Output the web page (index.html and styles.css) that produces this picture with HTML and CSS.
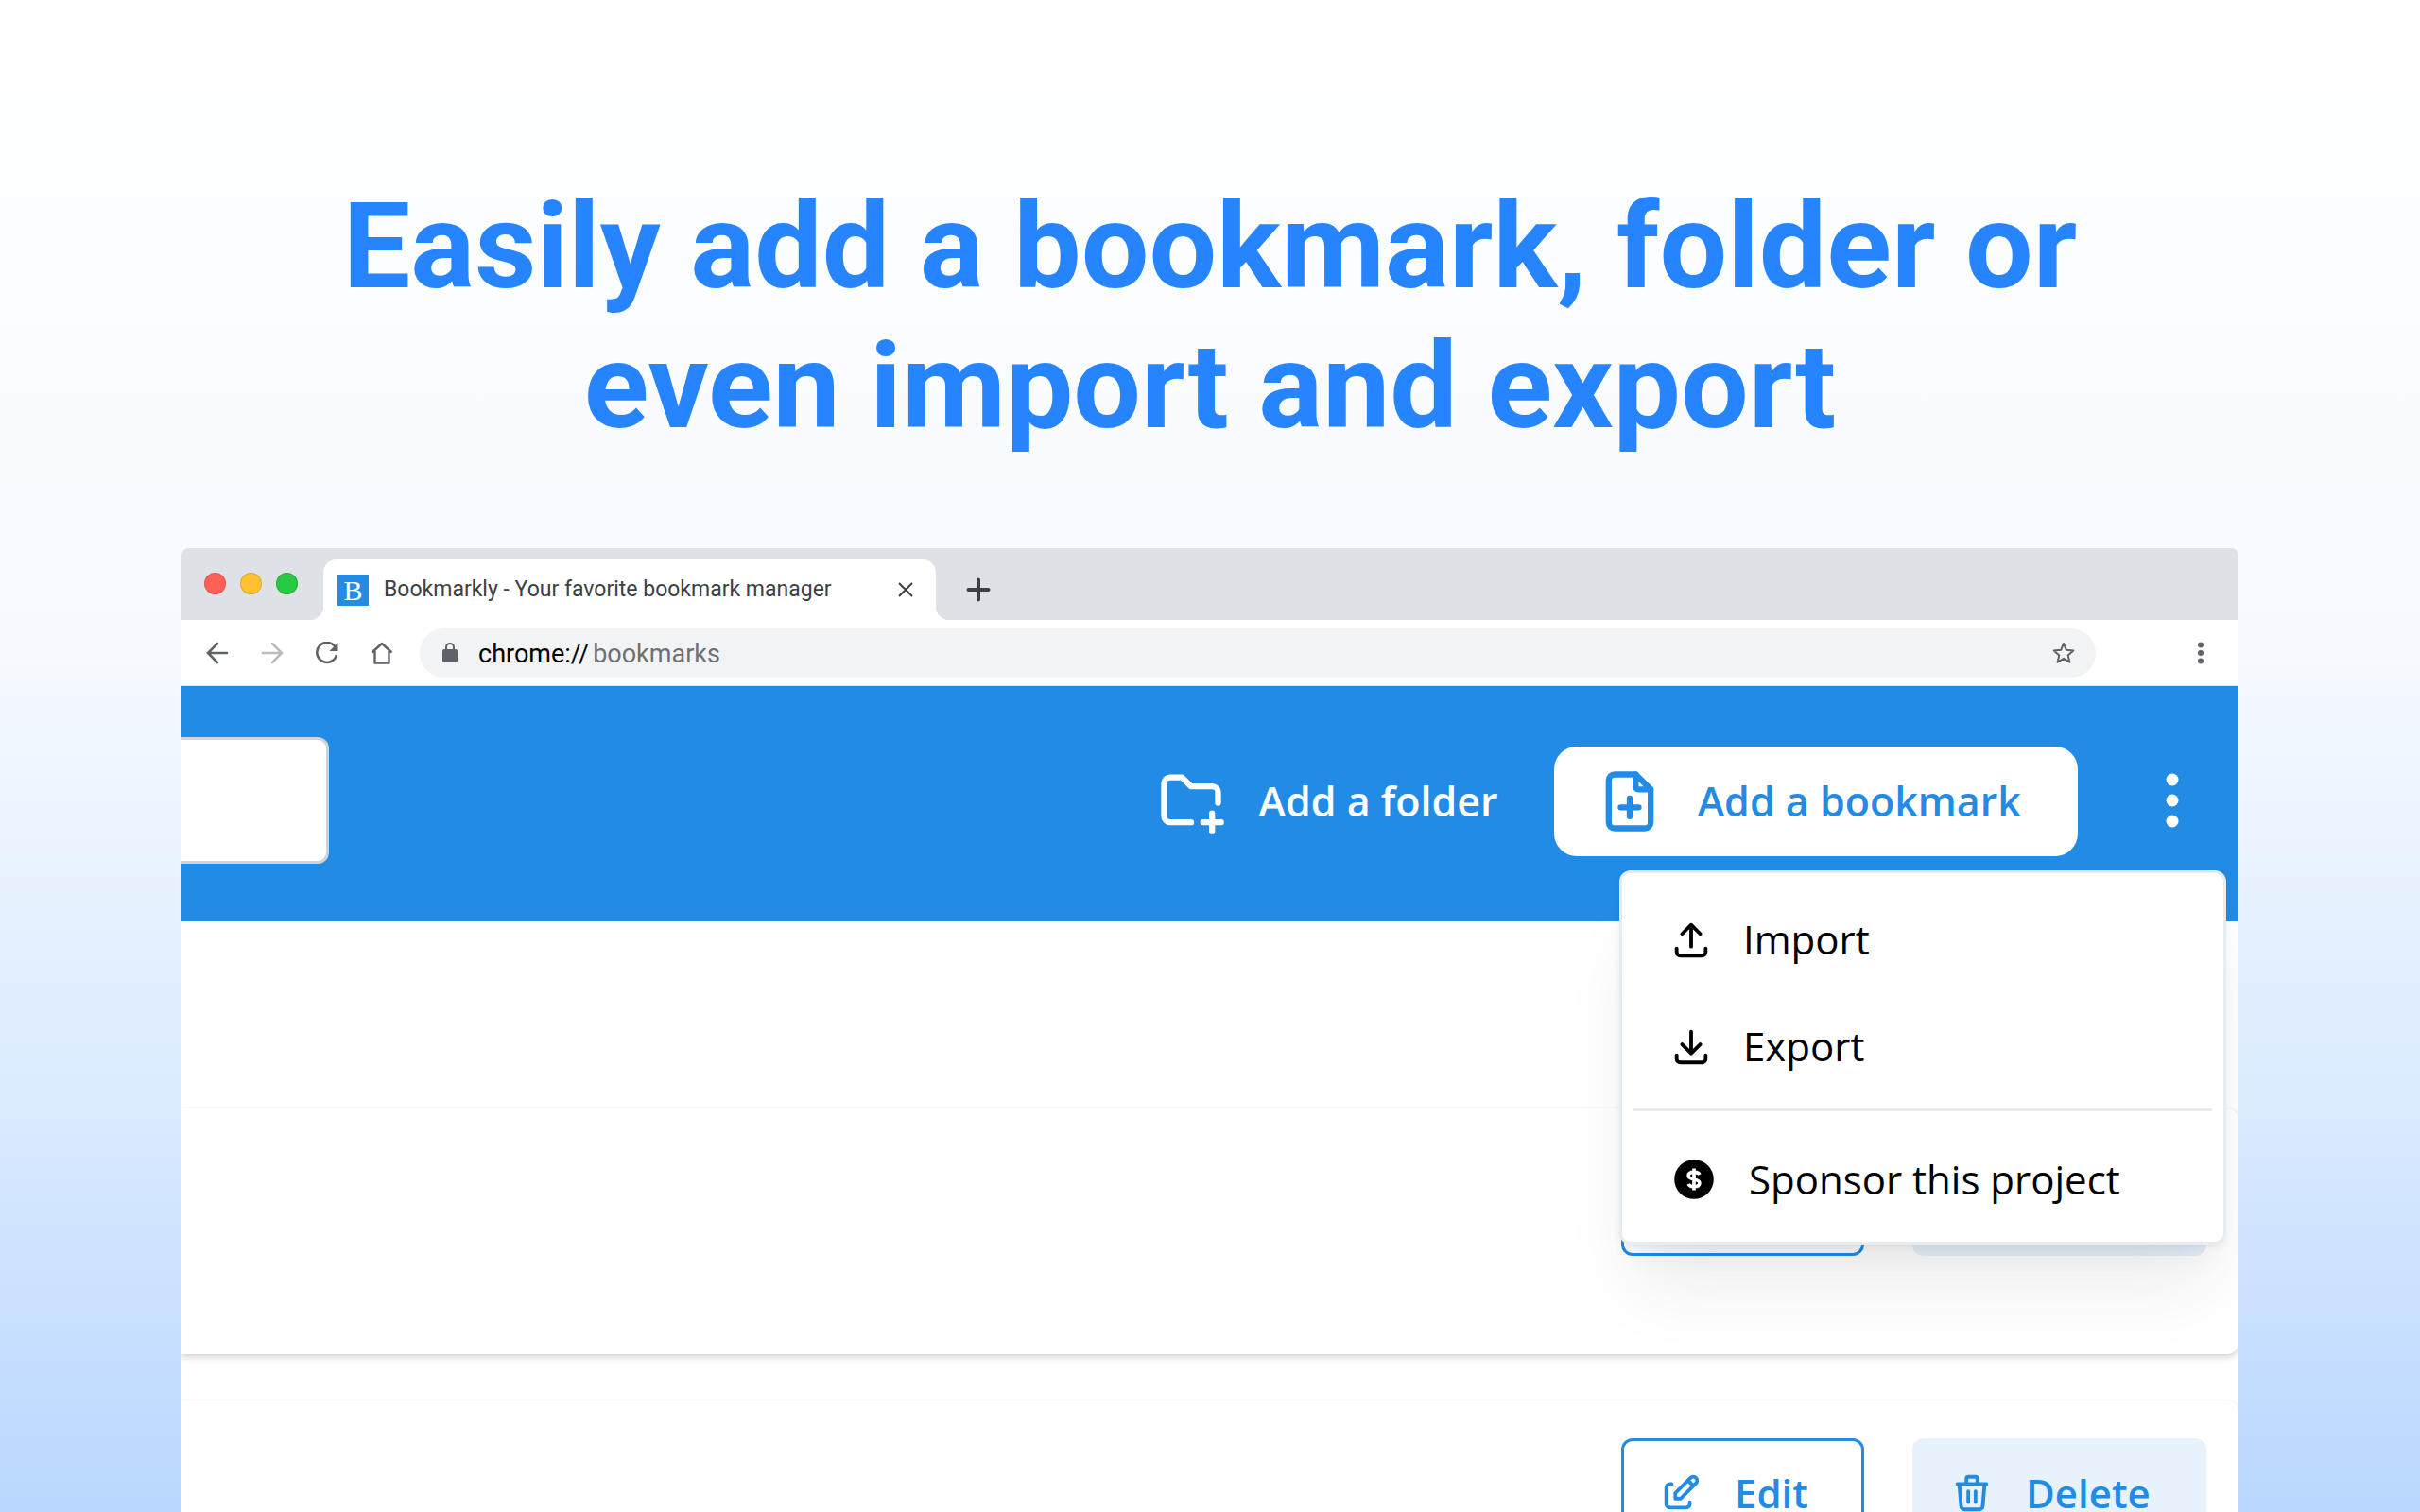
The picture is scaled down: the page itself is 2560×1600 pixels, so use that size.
FILE: index.html
```html
<!DOCTYPE html>
<html lang="en">
<head>
<meta charset="utf-8">
<title>Bookmarkly</title>
<link rel="stylesheet" href="styles.css">
</head>
<body>
<main class="promo">
  <h1 class="headline">Easily add a bookmark, folder or<br>even import and export</h1>

  <section class="window">
    <div class="tab-strip">
      <div class="lights">
        <span class="light light-red"></span>
        <span class="light light-yellow"></span>
        <span class="light light-green"></span>
      </div>
      <div class="tab">
        <span class="favicon">B</span>
        <span class="tab-title">Bookmarkly - Your favorite bookmark manager</span>
        <button class="tab-button" aria-label="Close tab">
          <svg width="16" height="16" viewBox="0 0 16 16" fill="none" stroke="#3c4043" stroke-width="2"><path d="M1 1 15 15M15 1 1 15"/></svg>
        </button>
      </div>
      <button class="tab-button new-tab" aria-label="New tab">
        <svg width="26" height="26" viewBox="0 0 26 26" fill="none" stroke="#3c4043" stroke-width="4" stroke-linecap="round"><path d="M13 2.500V23.500M2.500 13H23.500"/></svg>
      </button>
    </div>

    <div class="toolbar">
      <div class="nav">
        <button class="nav-button" aria-label="Back">
          <svg width="24" height="24" viewBox="0 0 24 24" fill="none" stroke="#5f6368" stroke-width="2.600" stroke-linecap="round"><path d="M22 12H2.500M12 2 2 12 12 22"/></svg>
        </button>
        <button class="nav-button" aria-label="Forward">
          <svg width="24" height="24" viewBox="0 0 24 24" fill="none" stroke="#babcbe" stroke-width="2.600" stroke-linecap="round"><path d="M2 12H21.500M12 2 22 12 12 22"/></svg>
        </button>
        <button class="nav-button" aria-label="Reload">
          <svg width="24" height="24" viewBox="0 0 24 24" fill="none" stroke="#5f6368" stroke-width="2.600"><path d="M20.500 5.500A10.500 10.500 0 1 0 22 14"/><path d="M23.500 1V10H14.500Z" fill="#5f6368" stroke="none"/></svg>
        </button>
        <button class="nav-button" aria-label="Home">
          <svg width="24" height="24" viewBox="0 0 24 24" fill="none" stroke="#5f6368" stroke-width="2.400" stroke-linejoin="round"><path d="M1.500 11.500 12 2 22.500 11.500"/><path d="M4.500 10V22.500H19.500V10"/></svg>
        </button>
      </div>
      <div class="address">
        <svg width="16" height="22" viewBox="0 0 16 22"><path d="M4 8V5a4 4 0 0 1 8 0v3" fill="none" stroke="#5f6368" stroke-width="2"/><rect y="7" width="16" height="14" rx="2" fill="#5f6368"/></svg>
        <span class="url">chrome://<span class="url-path">bookmarks</span></span>
        <button class="nav-button" aria-label="Bookmark this tab">
          <svg width="24" height="24" viewBox="0 0 24 24" fill="none" stroke="#5f6368" stroke-width="2" stroke-linejoin="round"><path d="M12 2 14.900 8.800 22.300 9.500 16.700 14.400 18.400 21.700 12 17.800 5.600 21.700 7.300 14.400 1.700 9.500 9.100 8.800Z"/></svg>
        </button>
      </div>
      <button class="nav-button" aria-label="Browser menu">
        <svg width="24" height="24" viewBox="0 0 24 24" fill="#5f6368"><circle cx="12" cy="3.500" r="3"/><circle cx="12" cy="12" r="3"/><circle cx="12" cy="20.500" r="3"/></svg>
      </button>
    </div>

    <div class="app">
      <header class="app-header">
        <input class="search" type="text" aria-label="Search">
        <button class="header-button">
          <svg width="76" height="76" viewBox="0 0 24 24" fill="none" stroke="#fff" stroke-width="2" stroke-linecap="round" stroke-linejoin="round"><path d="M12 19H5a2 2 0 0 1-2-2V6a2 2 0 0 1 2-2h4l3 3h7a2 2 0 0 1 2 2v3.500"/><path d="M16 19h6M19 16v6"/></svg>
          <span>Add a folder</span>
        </button>
        <button class="header-button header-button-light">
          <svg width="76" height="76" viewBox="0 0 24 24" fill="none" stroke="#228be6" stroke-width="2" stroke-linecap="round" stroke-linejoin="round"><path d="M14 3v4a1 1 0 0 0 1 1h4"/><path d="M17 21H7a2 2 0 0 1-2-2V5a2 2 0 0 1 2-2h7l5 5v11a2 2 0 0 1-2 2Z"/><path d="M12 11v6M9 14h6"/></svg>
          <span>Add a bookmark</span>
        </button>
        <div class="more">
          <button class="more-button" aria-label="More" aria-expanded="true">
            <svg width="16" height="60" viewBox="0 0 16 60" fill="#fff"><circle cx="8" cy="7" r="6.500"/><circle cx="8" cy="29" r="6.500"/><circle cx="8" cy="51" r="6.500"/></svg>
          </button>
          <div class="menu" role="menu">
            <button class="menu-item" role="menuitem">
              <svg width="46" height="50" viewBox="0 0 24 24" fill="none" stroke="#000" stroke-width="2" stroke-linecap="round" stroke-linejoin="round"><path d="M4 17v2a2 2 0 0 0 2 2h12a2 2 0 0 0 2-2v-2"/><path d="M7 9l5-5 5 5M12 4v12"/></svg>
              <span>Import</span>
            </button>
            <button class="menu-item" role="menuitem">
              <svg width="46" height="50" viewBox="0 0 24 24" fill="none" stroke="#000" stroke-width="2" stroke-linecap="round" stroke-linejoin="round"><path d="M4 17v2a2 2 0 0 0 2 2h12a2 2 0 0 0 2-2v-2"/><path d="M7 11l5 5 5-5M12 4v12"/></svg>
              <span>Export</span>
            </button>
            <hr class="menu-divider">
            <button class="menu-item" role="menuitem">
              <svg width="52" height="54" viewBox="0 0 24 24"><circle cx="12" cy="12" r="9.600"/><path d="M14.700 9.700A2.600 1.700 0 0 0 12 8.500c-1.700 0-2.700.7-2.700 1.700 0 2.500 5.400 1.100 5.400 3.600 0 1-1 1.700-2.700 1.700a2.600 1.700 0 0 1-2.700-1.200M12 6.700v10.600" fill="none" stroke="#fff" stroke-width="1.700"/></svg>
              <span>Sponsor this project</span>
            </button>
          </div>
        </div>
      </header>

      <div class="list">
        <article class="card">
          <button class="card-button edit" aria-label="Edit">
            <svg width="46" height="50" viewBox="0 0 24 24" fill="none" stroke="#228be6" stroke-width="2" stroke-linecap="round" stroke-linejoin="round"><path d="M7 7H6a2 2 0 0 0-2 2v9a2 2 0 0 0 2 2h9a2 2 0 0 0 2-2v-1"/><path d="M20.400 6.600a2.100 2.100 0 0 0-3-3L9 12v3h3l8.400-8.400ZM16 5l3 3"/></svg>
          </button>
          <button class="card-button delete" aria-label="Delete">
            <svg width="46" height="50" viewBox="0 0 24 24" fill="none" stroke="#228be6" stroke-width="2" stroke-linecap="round" stroke-linejoin="round"><path d="M4 7h16M10 11v6M14 11v6M5 7l1 12a2 2 0 0 0 2 2h8a2 2 0 0 0 2-2l1-12M9 7V4a1 1 0 0 1 1-1h4a1 1 0 0 1 1 1v3"/></svg>
          </button>
        </article>
        <article class="card">
          <button class="card-button edit">
            <svg width="46" height="50" viewBox="0 0 24 24" fill="none" stroke="#228be6" stroke-width="2" stroke-linecap="round" stroke-linejoin="round"><path d="M7 7H6a2 2 0 0 0-2 2v9a2 2 0 0 0 2 2h9a2 2 0 0 0 2-2v-1"/><path d="M20.400 6.600a2.100 2.100 0 0 0-3-3L9 12v3h3l8.400-8.400ZM16 5l3 3"/></svg>
            <span>Edit</span>
          </button>
          <button class="card-button delete">
            <svg width="46" height="50" viewBox="0 0 24 24" fill="none" stroke="#228be6" stroke-width="2" stroke-linecap="round" stroke-linejoin="round"><path d="M4 7h16M10 11v6M14 11v6M5 7l1 12a2 2 0 0 0 2 2h8a2 2 0 0 0 2-2l1-12M9 7V4a1 1 0 0 1 1-1h4a1 1 0 0 1 1 1v3"/></svg>
            <span>Delete</span>
          </button>
        </article>
      </div>
    </div>
  </section>
</main>
</body>
</html>
```
FILE: styles.css
```css
* { box-sizing: border-box; }

body {
  margin: 0;
  font-family: Roboto, "Liberation Sans", sans-serif;
}

button {
  display: flex;
  align-items: center;
  padding: 0;
  border: 0;
  background: none;
  font: inherit;
  color: inherit;
  cursor: pointer;
}

svg { display: block; flex: none; }

.promo {
  display: flex;
  flex-direction: column;
  height: 100vh;
  padding: 187px 7.5% 0;
  overflow: hidden;
  background: linear-gradient(#fff 0%, #f6faff 43%, #dcebff 72%, #b9d7ff 100%);
}

.headline {
  margin: 0 0 97px;
  font-size: 127px;
  line-height: 148px;
  font-weight: 700;
  text-align: center;
  color: #2684ff;
}

.window {
  flex: 1 0 auto;
  border-radius: 8px 8px 0 0;
  background: #fff;
}

/* Browser frame */

.tab-strip {
  display: flex;
  align-items: flex-end;
  height: 76px;
  padding-left: 24px;
  border-radius: 8px 8px 0 0;
  background: #dee1e6;
}

.lights {
  display: flex;
  gap: 15px;
  width: 126px;
  padding-bottom: 27px;
}

.light {
  width: 23px;
  height: 23px;
  border: 1px solid rgba(0, 0, 0, .12);
  border-radius: 50%;
}

.light-red { background: #ff6058; }
.light-yellow { background: #ffc130; }
.light-green { background: #27ca40; }

.tab {
  position: relative;
  display: flex;
  align-items: center;
  width: 648px;
  height: 64px;
  padding: 0 24px 0 15px;
  border-radius: 14px 14px 0 0;
  background: #fff;
}

.tab::before,
.tab::after {
  content: "";
  position: absolute;
  bottom: 0;
  width: 14px;
  height: 14px;
}

.tab::before {
  right: 100%;
  background: radial-gradient(circle at 0 0, #dee1e6 14px, #fff 14px);
}

.tab::after {
  left: 100%;
  background: radial-gradient(circle at 100% 0, #dee1e6 14px, #fff 14px);
}

.favicon {
  width: 33px;
  height: 33px;
  margin-right: 16px;
  background: #228be6;
  color: #fff;
  font: 30px/33px "Liberation Serif", serif;
  text-align: center;
}

.tab-title {
  flex: 1;
  font-size: 23px;
  line-height: 28px;
  white-space: nowrap;
  color: #3c4043;
}

.new-tab {
  margin-left: 32px;
  padding-bottom: 19px;
}

.toolbar {
  display: flex;
  align-items: center;
  height: 70px;
  padding-right: 28px;
  border-bottom: 1px solid #dee1e6;
}

.nav {
  display: flex;
  gap: 34px;
  width: 252px;
  padding-left: 26px;
}

.address {
  display: flex;
  flex: 1;
  align-items: center;
  height: 52px;
  margin-right: 99px;
  padding: 0 22px 0 24px;
  border-radius: 26px;
  background: #f1f3f4;
}

.url {
  flex: 1;
  margin-left: 22px;
  padding-top: 2px;
  font-size: 27px;
  line-height: 32px;
  color: #000;
}

.url-path { margin-left: 4px; color: #6e7174; }

/* Bookmarks page */

.app {
  overflow: hidden;
  font-family: "Open Sans", "Noto Sans", sans-serif;
  font-size: 42px;
  line-height: 56px;
}

.app-header {
  position: relative;
  z-index: 1;
  display: flex;
  align-items: center;
  height: 249px;
  padding: 0 62px 5px 0;
  background: #228be6;
}

.search {
  width: 156px;
  height: 134px;
  margin: 0 auto 2px 0;
  border: 3px solid #ced4da;
  border-left: 0;
  border-radius: 0 12px 12px 0;
  background: #fff;
  font: inherit;
}

.header-button {
  gap: 34px;
  height: 116px;
  margin-right: 59px;
  font-size: 43px;
  font-weight: 600;
  white-space: nowrap;
  color: #fff;
}

.header-button-light {
  margin-right: 92px;
  padding: 0 60px 0 42px;
  border-radius: 24px;
  background: #fff;
  color: #228be6;
}

.more { position: relative; }

.menu {
  position: absolute;
  top: 103px;
  right: -49px;
  width: 642px;
  padding: 13px 12px 10px;
  border: 3px solid #e9ecef;
  border-radius: 12px;
  background: #fff;
  box-shadow: 0 3px 9px rgba(0, 0, 0, .05), 0 60px 75px -15px rgba(0, 0, 0, .07), 0 30px 30px -15px rgba(0, 0, 0, .04);
  color: #000;
}

.menu-item {
  gap: 32px;
  width: 100%;
  height: 113px;
  padding-left: 38px;
  white-space: nowrap;
}

.menu-divider {
  height: 3px;
  margin: 10px 0 15px;
  border: 0;
  background: #e9ecef;
}

.list { padding-top: 198px; }

.card {
  display: flex;
  gap: 51px;
  justify-content: flex-end;
  height: 260px;
  margin-bottom: 49px;
  padding: 40px 34px 0 0;
  border-radius: 0 12px 12px 0;
  background: #fff;
  box-shadow: 0 0 3px rgba(0, 0, 0, .06), 0 3px 9px rgba(0, 0, 0, .05), 0 4px 6px rgba(0, 0, 0, .1);
}

.card-button {
  gap: 34px;
  width: 311px;
  height: 116px;
  padding-left: 40px;
  border-radius: 12px;
  font-weight: 600;
  color: #228be6;
}

.edit {
  width: 257px;
  padding-left: 37px;
  border: 3px solid #228be6;
}

.delete { background: #e7f2fc; }
```
